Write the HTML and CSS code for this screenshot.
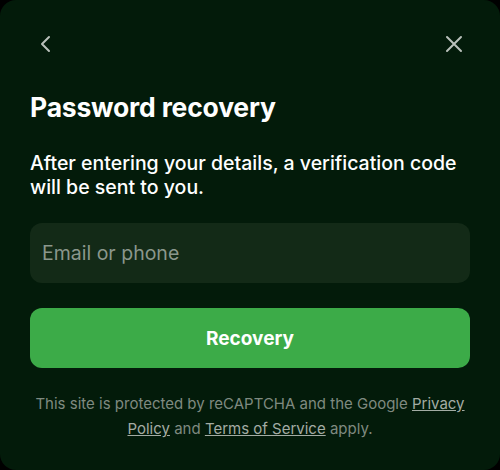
FILE: index.html
```html
<!DOCTYPE html>
<html lang="en">
<head>
    <meta charset="UTF-8">
    <meta name="viewport" content="width=device-width, initial-scale=1.0">
    <title>Password recovery</title>
    <link rel="stylesheet" href="styles.css">
</head>
<body>

    <!-- Recovery dialog -->
    <div class="modal">
        <div class="modal-header">
            <button class="icon-btn" aria-label="Back">
                <svg width="20" height="20" viewBox="0 0 20 20" fill="none" stroke="#b9c0ba" stroke-width="2" stroke-linecap="round" stroke-linejoin="round">
                    <path d="M13 3 L6 10 L13 17"/>
                </svg>
            </button>
            <button class="icon-btn" aria-label="Close">
                <svg width="20" height="20" viewBox="0 0 20 20" fill="none" stroke="#b9c0ba" stroke-width="2" stroke-linecap="round">
                    <path d="M3 3 L17 17 M17 3 L3 17"/>
                </svg>
            </button>
        </div>

        <h1 class="modal-title">Password recovery</h1>
        <p class="modal-text">After entering your details, a verification code will be sent to you.</p>

        <input class="field" type="text" placeholder="Email or phone">
        <button class="submit-btn">Recovery</button>

        <p class="legal">This site is protected by reCAPTCHA and the Google <a href="#">Privacy Policy</a> and <a href="#">Terms of Service</a> apply.</p>
    </div>

</body>
</html>
```

FILE: styles.css
```css
/* General reset */
* {
    margin: 0;
    padding: 0;
    box-sizing: border-box;
}

:root {
    --panel: #031b0a;
    --field: #132a17;
    --accent: #3cab48;
    --text: #ffffff;
    --muted: #7f8a80;
}

body {
    font-family: Inter, "Noto Sans", Arial, sans-serif;
    background-color: #000;
    width: 500px;
    height: 470px;
}

/* Dialog */
.modal {
    width: 500px;
    height: 470px;
    background-color: var(--panel);
    border-radius: 16px;
    padding: 34px 30px 0;
    color: var(--text);
}

.modal-header {
    display: flex;
    justify-content: space-between;
    align-items: center;
    margin: 0 6px 0 6px;
}

.icon-btn {
    background: none;
    border: none;
    width: 20px;
    height: 20px;
    display: flex;
    cursor: pointer;
}

.modal-title {
    font-size: 26.5px;
    font-weight: 700;
    letter-spacing: -0.2px;
    margin-top: 37px;
    line-height: 32px;
}

.modal-text {
    font-size: 19.5px;
    font-weight: 500;
    line-height: 24px;
    margin-top: 28px;
    padding-right: 8px;
}

/* Input */
.field {
    display: block;
    width: 100%;
    height: 60px;
    margin-top: 24px;
    padding: 0 12px;
    border: none;
    border-radius: 12px;
    background-color: var(--field);
    font-family: inherit;
    font-size: 19.5px;
    color: var(--text);
    outline: none;
}

.field::placeholder {
    color: #8b978c;
}

/* Submit button */
.submit-btn {
    display: block;
    width: 100%;
    height: 60px;
    margin-top: 25px;
    border: none;
    border-radius: 12px;
    background-color: var(--accent);
    color: var(--text);
    font-family: inherit;
    font-size: 19px;
    font-weight: 700;
    cursor: pointer;
}

/* Legal footer */
.legal {
    margin-top: 23px;
    text-align: center;
    font-size: 15px;
    line-height: 25px;
    color: var(--muted);
    padding: 0 4px;
}

.legal a {
    color: #a3aca4;
    text-decoration: underline;
}
```
